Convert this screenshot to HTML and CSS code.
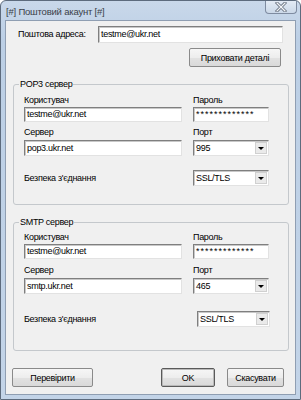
FILE: index.html
```html
<!DOCTYPE html>
<html lang="uk">
<head>
  <meta charset="UTF-8">
  <meta name="viewport" content="width=device-width, initial-scale=1.0">
  <title>Поштовий акаунт</title>
  <link rel="stylesheet" href="styles.css">
</head>
<body>

  <div class="window">
    <div class="titlebar">
      <span class="title">[#] Поштовий акаунт [#]</span>
      <span class="close">
        <svg width="14" height="10" viewBox="0 0 14 10">
          <path d="M3 1 L11 9 M11 1 L3 9" stroke="#6d7786" stroke-width="3" stroke-linecap="square"/>
          <path d="M3 1 L11 9 M11 1 L3 9" stroke="#f4f6f8" stroke-width="1.2" stroke-linecap="square"/>
        </svg>
      </span>
    </div>

    <div class="client">
      <div class="address-row">
        <span class="lbl address-lbl">Поштова адреса:</span>
        <div class="input address-input">testme@ukr.net</div>
      </div>
      <div class="details-row">
        <button class="btn details-btn">Приховати деталі</button>
      </div>

      <div class="group pop3">
        <span class="group-title">POP3 сервер</span>
        <div class="fields">
          <span class="lbl">Користувач</span>
          <span class="lbl">Пароль</span>
          <div class="input">testme@ukr.net</div>
          <div class="input pass">*************</div>
          <span class="lbl second">Сервер</span>
          <span class="lbl second">Порт</span>
          <div class="input tall">pop3.ukr.net</div>
          <div class="select tall">995<span class="arrow"></span></div>
        </div>
        <div class="security">
          <span class="lbl">Безпека з'єднання</span>
          <div class="select">SSL/TLS<span class="arrow"></span></div>
        </div>
      </div>

      <div class="group smtp">
        <span class="group-title">SMTP сервер</span>
        <div class="fields">
          <span class="lbl">Користувач</span>
          <span class="lbl">Пароль</span>
          <div class="input">testme@ukr.net</div>
          <div class="input pass">*************</div>
          <span class="lbl second">Сервер</span>
          <span class="lbl second">Порт</span>
          <div class="input tall">smtp.ukr.net</div>
          <div class="select tall">465<span class="arrow"></span></div>
        </div>
        <div class="security">
          <span class="lbl">Безпека з'єднання</span>
          <div class="select">SSL/TLS<span class="arrow"></span></div>
        </div>
      </div>

      <div class="actions">
        <button class="btn check-btn">Перевірити</button>
        <button class="btn ok-btn">OK</button>
        <button class="btn cancel-btn">Скасувати</button>
      </div>
    </div>
  </div>

</body>
</html>
```

FILE: styles.css
```css
body {
  margin: 0;
  background: #ffffff;
  font-family: "Liberation Sans", Arial, sans-serif;
  font-size: 9px;
  letter-spacing: -0.3px;
  color: #000;
}
.window {
  box-sizing: border-box;
  width: 301px;
  height: 400px;
  display: flex;
  flex-direction: column;
  border: 1px solid #5d6b7d;
  border-radius: 6px 6px 0 0;
  padding: 0 4px 4px;
  background: linear-gradient(#c9d8ea, #bccfe5 40px, #c3d4e8);
}
.titlebar {
  height: 19px;
  display: flex;
  align-items: flex-start;
  margin: 0 -1px;
}
.title {
  margin: 5px 0 0 2px;
  font-size: 9.5px;
  letter-spacing: -0.2px;
  color: #3a3f48;
}
.close {
  margin-left: auto;
  margin-right: 0;
  width: 32px;
  height: 13px;
  box-sizing: border-box;
  display: flex;
  align-items: center;
  justify-content: center;
  border: 1px solid #7e8ba0;
  border-top: none;
  border-radius: 0 0 4px 4px;
  background: linear-gradient(#e3ebf5, #cbd8e8);
}
.client {
  flex: 1;
  border: 1px solid #8f9eb2;
  background: #f0f0f0;
  padding-top: 5px;
  display: flex;
  flex-direction: column;
}
.lbl {
  line-height: 13px;
  height: 13px;
  white-space: nowrap;
}
.input, .select {
  box-sizing: border-box;
  height: 15px;
  line-height: 13px;
  padding-left: 2px;
  background: #fff;
  border: 1px solid;
  border-color: #7f7f7f #e2e2e2 #e2e2e2 #7f7f7f;
  box-shadow: inset 1px 1px 0 #c8c8c8;
  white-space: nowrap;
  overflow: hidden;
}
.input.tall, .select, .address-input {
  height: 16px;
  line-height: 14px;
}
.address-input {
  height: 17px;
  line-height: 15px;
}
.pass {
  letter-spacing: 1px;
}
.select {
  display: flex;
  align-items: center;
  line-height: normal;
}
.arrow {
  margin-left: auto;
  width: 12px;
  height: 12px;
  margin-right: 1px;
  box-sizing: border-box;
  background: #eaeaea;
  border: 1px solid #d0d0d0;
  display: flex;
  align-items: center;
  justify-content: center;
}
.arrow::after {
  content: "";
  border-left: 3px solid transparent;
  border-right: 3px solid transparent;
  border-top: 3px solid #000;
  margin-top: 1px;
}
.address-row {
  display: flex;
  align-items: center;
}
.address-lbl {
  width: 80px;
  margin-left: 12px;
}
.address-input {
  width: 185px;
}
.details-row {
  display: flex;
  justify-content: flex-end;
  margin-top: 5px;
  padding-right: 14px;
}
.btn {
  box-sizing: border-box;
  height: 19px;
  padding: 0;
  font: inherit;
  letter-spacing: inherit;
  color: #000;
  border: 1px solid #8a8a8a;
  border-radius: 2px;
  background: linear-gradient(#f6f6f6, #ededed 50%, #e2e2e2 50%, #d9d9d9);
}
.details-btn {
  width: 92px;
}
.group {
  margin: 17px 6px 0 7px;
  border: 1px solid #c4c8cc;
  border-radius: 3px;
  padding: 0 0 18px 10px;
}
.group-title {
  display: block;
  width: max-content;
  margin: -7px 0 0 -5px;
  padding: 0 1px;
  line-height: 13px;
  background: #f0f0f0;
}
.fields {
  display: grid;
  grid-template-columns: 158px 76px;
  column-gap: 11px;
  margin-top: 3px;
}
.fields .second {
  margin-top: 4px;
}
.fields .tall {
  margin-top: 1px;
}
.security {
  display: grid;
  grid-template-columns: 158px 76px;
  column-gap: 11px;
  align-items: center;
  margin-top: 14px;
}
.smtp {
  padding-bottom: 23px;
}
.smtp .fields {
  margin-top: 2px;
}
.smtp .fields .second {
  margin-top: 5px;
}
.smtp .security {
  margin-top: 17px;
}
.smtp .security .select {
  margin-left: 4px;
  width: 73px;
}
.actions {
  display: flex;
  margin-top: 17px;
  padding: 0 11px 0 6px;
}
.check-btn {
  width: 81px;
}
.ok-btn {
  width: 54px;
  margin-left: auto;
  border-color: #5a5a5a;
  box-shadow: inset 0 0 0 1px #b9b9b9;
}
.cancel-btn {
  width: 57px;
  margin-left: 12px;
}
```
